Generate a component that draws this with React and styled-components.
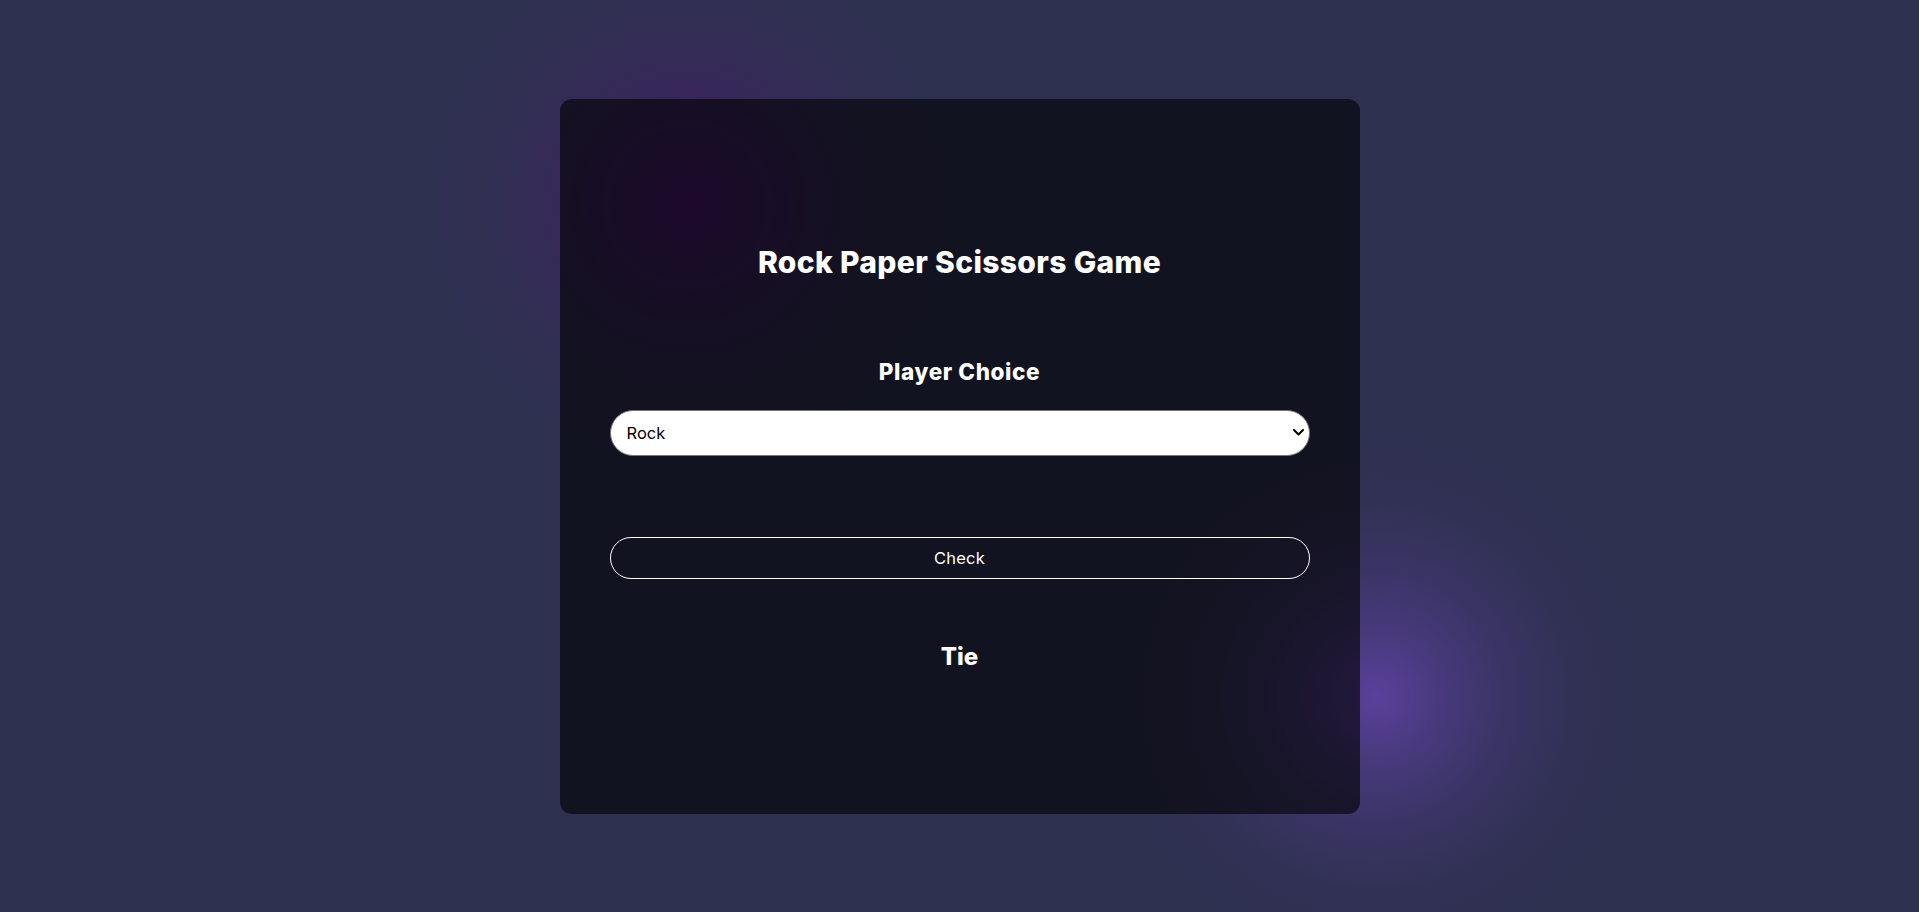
import React, { useState } from "react";
import styled, { createGlobalStyle } from "styled-components";

const GlobalStyle = createGlobalStyle`
  html, body {
    margin: 0;
    padding: 0;
  }
  body {
    font-family: Inter, "Open Sans", sans-serif;
    background: #2e3050;
  }
  * { box-sizing: border-box; }
`;

const Page = styled.main`
  min-height: 100vh;
  display: flex;
  align-items: center;
  justify-content: center;
  background-color: #2e3050;
  background-image:
    radial-gradient(circle 260px at 688px 205px,
      rgba(74, 22, 110, 1) 0%,
      rgba(74, 22, 110, 0.58) 25%,
      rgba(74, 22, 110, 0.27) 50%,
      rgba(74, 22, 110, 0.07) 75%,
      rgba(74, 22, 110, 0) 100%),
    radial-gradient(circle 260px at 1377px 697px,
      rgba(90, 64, 156, 1) 0%,
      rgba(90, 64, 156, 0.58) 25%,
      rgba(90, 64, 156, 0.27) 50%,
      rgba(90, 64, 156, 0.07) 75%,
      rgba(90, 64, 156, 0) 100%);
`;

const Card = styled.section`
  width: 800px;
  height: 715px;
  border-radius: 12px;
  background: rgba(0, 0, 0, 0.6);
  display: flex;
  flex-direction: column;
  align-items: center;
  justify-content: flex-start;
  padding: 145px 50px 0;
  color: #fff;
`;

const Title = styled.h1`
  margin: 0 0 78px;
  font-size: 30px;
  line-height: 1.2;
  font-weight: 800;
  letter-spacing: 0.35px;
  color: #fff;
`;

const Label = styled.h2`
  margin: 0 0 25px;
  font-size: 22.5px;
  line-height: 1.2;
  font-weight: 800;
  letter-spacing: 0.6px;
  color: #fff;
`;

const SelectWrap = styled.div`
  position: relative;
  width: 100%;
  margin: 0 0 81px;
`;

const Select = styled.select`
  display: block;
  width: 100%;
  height: 46px;
  border-radius: 23px;
  border: 1px solid #767676;
  background: #fff;
  color: #000;
  font-family: Inter, "Open Sans", sans-serif;
  font-size: 16.5px;
  padding: 0 30px 0 16px;
  appearance: none;
  -webkit-appearance: none;
  outline: none;
`;

const Chevron = styled.svg`
  position: absolute;
  right: 6px;
  top: 50%;
  width: 11px;
  height: 7px;
  margin-top: -4px;
  pointer-events: none;
`;

const Button = styled.button`
  width: 100%;
  height: 42px;
  border-radius: 21px;
  border: 1px solid #fff;
  background: transparent;
  color: #fff;
  font-family: Inter, "Open Sans", sans-serif;
  font-size: 16.5px;
  letter-spacing: 0.2px;
  cursor: pointer;
  margin: 0 0 64px;
`;

const Result = styled.h3`
  margin: 0;
  font-size: 24px;
  line-height: 1.2;
  font-weight: 800;
  color: #fff;
`;

const choices = ["Rock", "Paper", "Scissors"];

export default function App() {
  const [choice, setChoice] = useState("Rock");
  const [result, setResult] = useState("Tie");

  const check = () => {
    const computer = choices[Math.floor(Math.random() * 3)];
    if (computer === choice) setResult("Tie");
    else if (
      (choice === "Rock" && computer === "Scissors") ||
      (choice === "Paper" && computer === "Rock") ||
      (choice === "Scissors" && computer === "Paper")
    )
      setResult("You Win");
    else setResult("You Lose");
  };

  return (
    <>
      <GlobalStyle />
      <Page>
        <Card>
          <Title>Rock Paper Scissors Game</Title>
          <Label>Player Choice</Label>
          <SelectWrap>
            <Select value={choice} onChange={(e) => setChoice(e.target.value)}>
              {choices.map((c) => (
                <option key={c} value={c}>
                  {c}
                </option>
              ))}
            </Select>
            <Chevron viewBox="0 0 11 7" aria-hidden="true">
              <polyline
                points="1,1 5.5,5.5 10,1"
                fill="none"
                stroke="#000"
                strokeWidth="2"
                strokeLinecap="round"
                strokeLinejoin="round"
              />
            </Chevron>
          </SelectWrap>
          <Button onClick={check}>Check</Button>
          <Result>{result}</Result>
        </Card>
      </Page>
    </>
  );
}
